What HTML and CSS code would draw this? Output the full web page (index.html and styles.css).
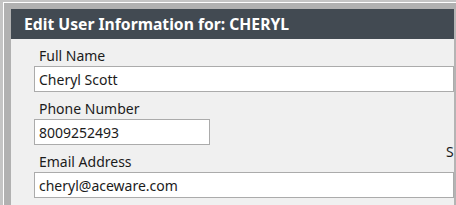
FILE: index.html
```html
<!DOCTYPE html>
<html lang="en">
<head>
  <meta charset="UTF-8">
  <title>Edit User Information</title>
  <link rel="stylesheet" href="styles.css">
</head>
<body>
<div class="window">
  <div class="panel">
    <div class="panel-header">Edit User Information for: CHERYL</div>
    <div class="form">
      <div class="field">
        <label for="fullName">Full Name</label>
        <input type="text" id="fullName" class="wide" value="Cheryl Scott">
      </div>
      <div class="field">
        <label for="phone">Phone Number</label>
        <input type="text" id="phone" class="short" value="8009252493">
      </div>
      <div class="field">
        <label for="email">Email Address</label>
        <input type="text" id="email" class="wide" value="cheryl@aceware.com">
      </div>
    </div>
    <div class="side-label">S</div>
  </div>
</div>
</body>
</html>
```

FILE: styles.css
```css
* { box-sizing: border-box; }
body {
  margin: 0;
  background: #c4c4c4;
  font-family: 'Noto Sans', 'Open Sans', sans-serif;
  color: #1b1b1b;
  height: 205px;
  overflow: hidden;
}
.window {
  margin: 2px 0 0 3px;
  border-top: 1px solid #fff;
  border-left: 1px solid #fff;
  background: #b1b1b1;
  padding: 6px 0 0 7px;
  height: 203px;
}
.panel {
  position: relative;
  background: #f0f0f0;
  border-right: 2px solid #b4b4b4;
  height: 100%;
  overflow: hidden;
}
.panel-header {
  background: #424a52;
  color: #fff;
  font-weight: bold;
  font-size: 15.7px;
  height: 30px;
  line-height: 30px;
  padding-left: 13px;
}
.form {
  padding-left: 23px;
  width: 444px;
}
.field {
  display: flex;
  flex-direction: column;
  align-items: flex-start;
  height: 53px;
}
.field label {
  font-size: 14px;
  margin-left: 5px;
  height: 27px;
  padding-top: 6px;
  line-height: 21px;
}
.field input {
  height: 26px;
  border: 1px solid #ababab;
  background: #fff;
  font-family: inherit;
  font-size: 14px;
  color: #1b1b1b;
  padding: 0 4px;
  outline: none;
}
.field input.wide { width: 420px; }
.field input.short { width: 176px; }
.side-label {
  position: absolute;
  left: 435px;
  top: 133px;
  font-size: 14px;
  line-height: 19px;
}
```
